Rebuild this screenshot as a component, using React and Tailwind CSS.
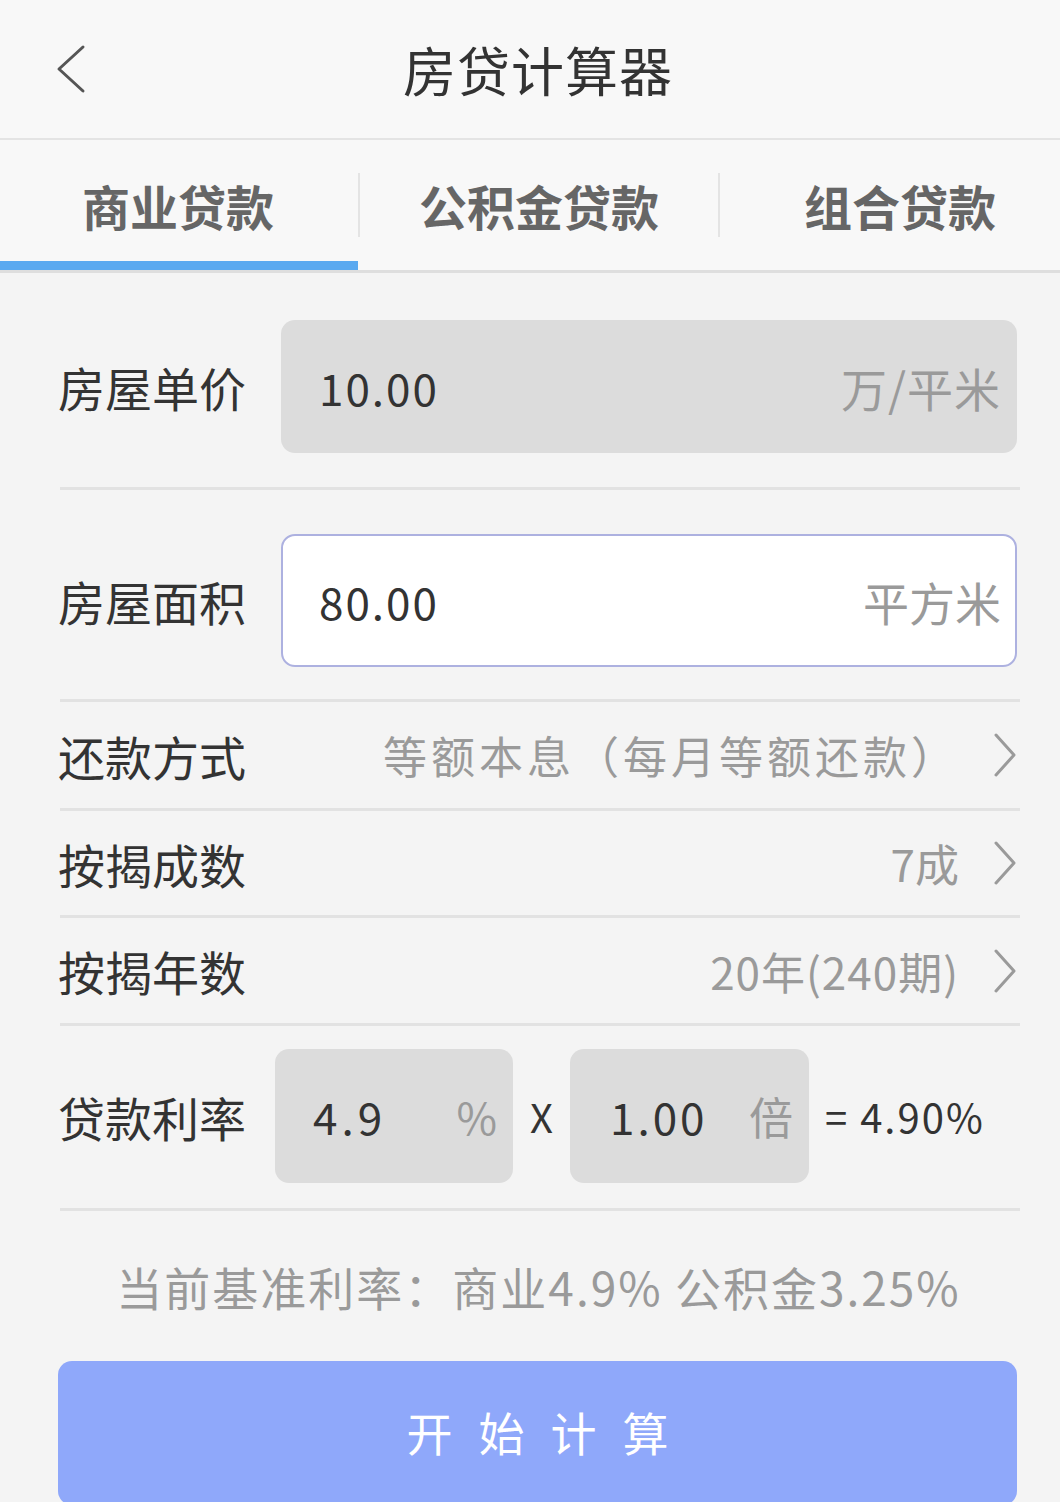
import React from "react";

const font = { fontFamily: '"Noto Sans CJK SC", "Noto Sans", sans-serif' };

function Chevron({ className }) {
  return (
    <svg viewBox="0 0 24 44" className={className} fill="none" stroke="currentColor" strokeWidth="3" strokeLinecap="round" strokeLinejoin="round">
      <path d="M3 2 L21 22 L3 42" />
    </svg>
  );
}

function Divider() {
  return <div className="h-[3px] bg-[#e2e2e2] ml-[2px] mr-[40px]" />;
}

function SelectRow({ label, value, h, track }) {
  return (
    <div className={`flex items-center ${h} pr-[43px]`}>
      <div className="text-[47px] text-[#333] leading-none">{label}</div>
      <div className="flex-1 flex items-center justify-end gap-[34px]">
        <span className={`text-[44px] text-[#9a9a9a] leading-none ${track}`}>{value}</span>
        <Chevron className="w-[24px] h-[44px] text-[#9a9a9a]" />
      </div>
    </div>
  );
}

export default function App() {
  return (
    <div className="w-[1060px] h-[1502px] bg-[#f4f4f4] overflow-hidden" style={font}>
      {/* header */}
      <div className="h-[140px] bg-[#f8f8f8] border-b-2 border-[#e4e4e4] grid grid-cols-[1fr_auto_1fr] items-center">
        <div className="pl-[56px] flex items-center">
          <svg viewBox="0 0 30 50" className="w-[30px] h-[50px] text-[#555]" fill="none" stroke="currentColor" strokeWidth="3" strokeLinecap="round" strokeLinejoin="round">
            <path d="M27 3 L3 25 L27 47" />
          </svg>
        </div>
        <div className="text-[53px] text-[#333] leading-none tracking-[1px] pl-[16px]">房贷计算器</div>
        <div />
      </div>
      {/* tabs */}
      <div className="h-[133px] bg-[#f8f8f8] border-b-[3px] border-[#dedede] flex items-stretch">
        <div className="w-[358px] flex items-center justify-center border-b-[9px] border-[#5aa9f0] text-[48px] font-semibold text-[#666] pt-[9px] pr-[2px]">商业贷款</div>
        <div className="self-center w-[2px] h-[64px] bg-[#e4e4e4]" />
        <div className="w-[358px] flex items-center justify-center text-[48px] font-semibold text-[#666]">公积金贷款</div>
        <div className="self-center w-[2px] h-[64px] bg-[#e4e4e4]" />
        <div className="flex-1 flex items-center justify-center text-[48px] font-semibold text-[#666] pl-[20px]">组合贷款</div>
      </div>
      {/* body */}
      <div className="pl-[58px]">
        <div className="pt-[47px] pb-[34px] flex items-center pr-[43px]">
          <div className="w-[223px] text-[47px] text-[#333] leading-none">房屋单价</div>
          <div className="flex-1 h-[133px] rounded-[14px] bg-[#dcdcdc] flex items-center justify-between pl-[38px] pr-[16px]">
            <span className="text-[44px] text-[#333] leading-none tracking-[2px]">10.00</span>
            <span className="text-[46px] text-[#9a9a9a] leading-none tracking-[1px]">万/平米</span>
          </div>
        </div>
        <Divider />
        <div className="pt-[44px] pb-[32px] flex items-center pr-[43px]">
          <div className="w-[223px] text-[47px] text-[#333] leading-none">房屋面积</div>
          <div className="flex-1 h-[133px] rounded-[14px] bg-white border-2 border-[#adb1e0] flex items-center justify-between pl-[36px] pr-[14px]">
            <span className="text-[44px] text-[#333] leading-none tracking-[2px]">80.00</span>
            <span className="text-[46px] text-[#9a9a9a] leading-none">平方米</span>
          </div>
        </div>
        <Divider />
        <SelectRow label="还款方式" value="等额本息（每月等额还款）" h="h-[106px]" track="tracking-[4px]" />
        <Divider />
        <SelectRow label="按揭成数" value="7成" h="h-[104px]" track="" />
        <Divider />
        <SelectRow label="按揭年数" value="20年(240期)" h="h-[105px]" track="tracking-[1px]" />
        <Divider />
        <div className="pt-[23px] pb-[25px] flex items-center">
          <div className="w-[217px] text-[47px] text-[#333] leading-none">贷款利率</div>
          <div className="w-[238px] h-[134px] rounded-[14px] bg-[#dcdcdc] flex items-center justify-between pl-[38px] pr-[16px]">
            <span className="text-[44px] text-[#333] leading-none tracking-[4px]">4.9</span>
            <span className="text-[44px] text-[#9a9a9a] leading-none">%</span>
          </div>
          <div className="w-[57px] text-center text-[40px] text-[#333] leading-none">X</div>
          <div className="w-[239px] h-[134px] rounded-[14px] bg-[#dcdcdc] flex items-center justify-between pl-[40px] pr-[16px]">
            <span className="text-[44px] text-[#333] leading-none tracking-[3px]">1.00</span>
            <span className="text-[44px] text-[#9a9a9a] leading-none">倍</span>
          </div>
          <div className="pl-[16px] text-[40px] text-[#333] leading-none tracking-[2px]">=&nbsp;4.90%</div>
        </div>
        <Divider />
      </div>
      <div className="h-[150px] flex items-center justify-center text-[46px] text-[#9a9a9a] leading-none pl-[17px] tracking-[2px]">
        当前基准利率：商业4.9%&nbsp;公积金3.25%
      </div>
      <div className="pl-[58px] pr-[43px]">
        <div className="h-[144px] rounded-[14px] bg-[#8fa8fa] flex items-center justify-center text-[46px] text-white tracking-[26px] pl-[26px] leading-none pb-[4px]">
          开始计算
        </div>
      </div>
    </div>
  );
}
